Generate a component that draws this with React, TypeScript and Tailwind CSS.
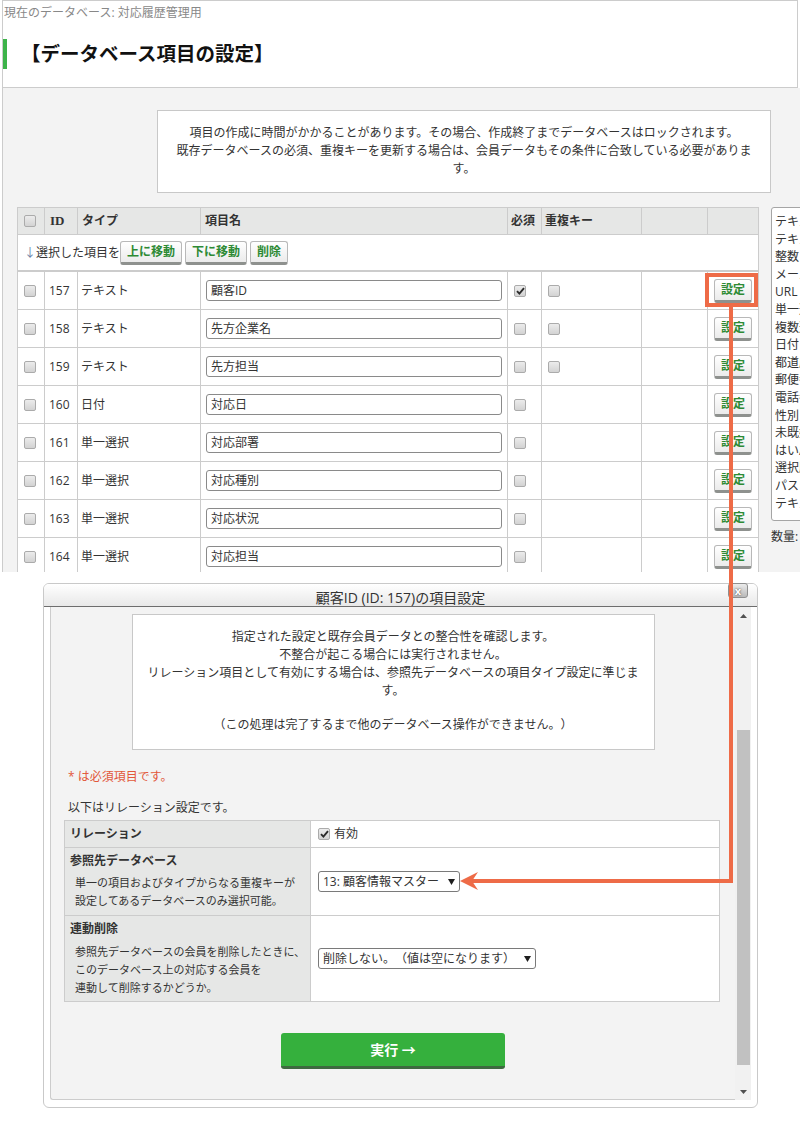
import type { ReactNode } from "react";

type FieldRow = {
  hasUniqueKey: boolean;
  id: number;
  name: string;
  required: boolean;
  type: string;
};

const fieldRows: FieldRow[] = [
  { id: 157, type: "テキスト", name: "顧客ID", required: true, hasUniqueKey: true },
  { id: 158, type: "テキスト", name: "先方企業名", required: false, hasUniqueKey: true },
  { id: 159, type: "テキスト", name: "先方担当", required: false, hasUniqueKey: true },
  { id: 160, type: "日付", name: "対応日", required: false, hasUniqueKey: false },
  { id: 161, type: "単一選択", name: "対応部署", required: false, hasUniqueKey: false },
  { id: 162, type: "単一選択", name: "対応種別", required: false, hasUniqueKey: false },
  { id: 163, type: "単一選択", name: "対応状況", required: false, hasUniqueKey: false },
  { id: 164, type: "単一選択", name: "対応担当", required: false, hasUniqueKey: false },
];

const typeOptions = [
  "テキスト",
  "テキストエリア",
  "整数",
  "メールアドレス",
  "URL",
  "単一選択",
  "複数選択",
  "日付",
  "都道府県",
  "郵便番号",
  "電話番号",
  "性別",
  "未既婚",
  "はい/いいえ",
  "選択肢",
  "パスワード",
  "テキスト（自動）",
];

function CheckBox({ checked = false }: { checked?: boolean }) {
  return (
    <span className="flex h-[12px] w-[12px] items-center justify-center rounded-[2px] border border-[#ababab] bg-[linear-gradient(#ececec,#d3d3d3)]">
      {checked ? (
        <svg width="9" height="8" viewBox="0 0 9 8">
          <path d="M1 4.2 3.4 6.6 8 1.2" fill="none" stroke="#2b2b2b" strokeWidth="1.9" />
        </svg>
      ) : null}
    </span>
  );
}

function GrayButton({ children }: { children: ReactNode }) {
  return (
    <button
      className="h-[24px] rounded-[3px] border border-[#b8b8b8] border-b-[3px] border-b-[#8e918e] bg-[linear-gradient(#ffffff,#ebebeb)] px-[6px] text-[12px] font-bold leading-[19px] text-[#2d8a34]"
      type="button"
    >
      {children}
    </button>
  );
}

function SelectBox({ label, width }: { label: string; width: "short" | "long" }) {
  return (
    <div
      className={
        width === "short"
          ? "flex h-[21px] w-[142px] items-center justify-between rounded-[3px] border border-[#7a7a7a] bg-white pl-[4px] pr-[4px] leading-[18px]"
          : "flex h-[21px] w-[218px] items-center justify-between rounded-[3px] border border-[#7a7a7a] bg-white pl-[4px] pr-[4px] leading-[18px]"
      }
    >
      <span className="whitespace-nowrap">{label}</span>
      <svg width="7" height="6" viewBox="0 0 7 6">
        <path d="M0 0h7L3.5 6z" fill="#1e1e1e" />
      </svg>
    </div>
  );
}

function FieldTable() {
  return (
    <div className="ml-[14px] w-[742px] border-l border-t border-[#ccc] bg-white">
      <div className="grid grid-cols-[27px_33px_123px_307px_34px_100px_66px_51px] bg-[#e6e7e6] font-bold">
        <div className="flex h-[27px] items-center border-b border-r border-[#ccc] pl-[6px]">
          <CheckBox />
        </div>
        <div className="flex h-[27px] items-center border-b border-r border-[#ccc] pl-[5px] font-[family-name:'Liberation_Serif',serif] text-[13px]">
          ID
        </div>
        <div className="flex h-[27px] items-center border-b border-r border-[#ccc] pl-[4px]">タイプ</div>
        <div className="flex h-[27px] items-center border-b border-r border-[#ccc] pl-[4px]">項目名</div>
        <div className="flex h-[27px] items-center border-b border-r border-[#ccc] pl-[3px]">必須</div>
        <div className="flex h-[27px] items-center border-b border-r border-[#ccc] pl-[3px]">重複キー</div>
        <div className="h-[27px] border-b border-r border-[#ccc]" />
        <div className="h-[27px] border-b border-r border-[#ccc]" />
      </div>

      <div className="flex h-[37px] items-center border-b-2 border-r border-[#ccc] pl-[6px]">
        <span className="whitespace-nowrap">
          <span className="text-[#6d82a8]">↓</span>選択した項目を
        </span>
        <div className="flex gap-[3px]">
          <GrayButton>上に移動</GrayButton>
          <GrayButton>下に移動</GrayButton>
          <GrayButton>削除</GrayButton>
        </div>
      </div>

      {fieldRows.map((row) => (
        <div className="grid grid-cols-[27px_33px_123px_307px_34px_100px_66px_51px]" key={row.id}>
          <div className="flex h-[38px] items-center border-b border-r border-[#ccc] pl-[6px]">
            <CheckBox />
          </div>
          <div className="flex h-[38px] items-center border-b border-r border-[#ccc] pl-[4px]">{row.id}</div>
          <div className="flex h-[38px] items-center border-b border-r border-[#ccc] pl-[3px]">{row.type}</div>
          <div className="flex h-[38px] items-center border-b border-r border-[#ccc] pl-[5px]">
            <div className="flex h-[21px] w-[296px] items-center rounded-[3px] border border-[#8a8a8a] bg-white pl-[4px] leading-[18px]">
              {row.name}
            </div>
          </div>
          <div className="flex h-[38px] items-center border-b border-r border-[#ccc] pl-[6px]">
            <CheckBox checked={row.required} />
          </div>
          <div className="flex h-[38px] items-center border-b border-r border-[#ccc] pl-[6px]">
            {row.hasUniqueKey ? <CheckBox /> : null}
          </div>
          <div className="h-[38px] border-b border-r border-[#ccc]" />
          <div className="flex h-[38px] items-center border-b border-r border-[#ccc] pl-[6px]">
            <GrayButton>設定</GrayButton>
          </div>
        </div>
      ))}
    </div>
  );
}

function SettingDialog() {
  return (
    <section className="ml-[43px] mt-[11px] w-[715px] rounded-[6px] border border-[#c9c9c9] bg-white">
      <div className="relative flex h-[23px] items-end justify-center rounded-t-[5px] border-b border-[#6d6d6d] bg-[linear-gradient(#ffffff,#e8e8e8)] text-[14px] leading-[17px]">
        顧客ID (ID: 157)の項目設定
        <span className="absolute right-[9px] top-[-1px] flex h-[15px] w-[20px] items-center justify-center rounded-[3px] border border-[#8f8f8f] bg-[linear-gradient(#ececec,#b9b9b9)] text-[11px] font-bold leading-[11px] text-white [text-shadow:0_0_2px_#333]">
          x
        </span>
      </div>

      <div className="flex px-[6px] pb-[7px]">
        <div className="flex-1 rounded-bl-[3px] border-b border-l border-[#ccc] bg-[#f3f3f3] pb-[30px]">
          <div className="mx-auto mt-[7px] w-[523px] border border-[#c8c8c8] bg-white px-[12px] pb-[15px] pt-[13px] text-center leading-[18px]">
            <p>
              指定された設定と既存会員データとの整合性を確認します。
              <br />
              不整合が起こる場合には実行されません。
              <br />
              リレーション項目として有効にする場合は、参照先データベースの項目タイプ設定に準じます。
            </p>
            <p className="mt-[16px]">（この処理は完了するまで他のデータベース操作ができません。）</p>
          </div>

          <p className="ml-[17px] mt-[18px] leading-[18px] text-[#e2583a]">* は必須項目です。</p>
          <p className="ml-[17px] mt-[13px] leading-[18px]">以下はリレーション設定です。</p>

          <div className="ml-[13px] mt-[3px] w-[656px] border-l border-t border-[#ccc]">
            <div className="grid grid-cols-[246px_409px]">
              <div className="flex h-[27px] items-center border-b border-r border-[#ccc] bg-[#e6e7e6] pl-[5px] font-bold">
                リレーション
              </div>
              <div className="flex h-[27px] items-center gap-[4px] border-b border-r border-[#ccc] bg-white pl-[7px]">
                <CheckBox checked />
                有効
              </div>

              <div className="h-[68px] border-b border-r border-[#ccc] bg-[#e6e7e6] pl-[5px] pt-[4px] leading-[18px]">
                <p className="font-bold">参照先データベース</p>
                <p className="mt-[4px] pl-[5px] text-[11px]">
                  単一の項目およびタイプからなる重複キーが
                  <br />
                  設定してあるデータベースのみ選択可能。
                </p>
              </div>
              <div className="flex h-[68px] items-center border-b border-r border-[#ccc] bg-white pl-[7px]">
                <SelectBox label="13: 顧客情報マスター" width="short" />
              </div>

              <div className="h-[86px] border-b border-r border-[#ccc] bg-[#e6e7e6] pl-[5px] pt-[4px] leading-[18px]">
                <p className="font-bold">連動削除</p>
                <p className="mt-[5px] pl-[5px] text-[11px]">
                  参照先データベースの会員を削除したときに、
                  <br />
                  このデータベース上の対応する会員を
                  <br />
                  連動して削除するかどうか。
                </p>
              </div>
              <div className="flex h-[86px] items-center border-b border-r border-[#ccc] bg-white pl-[7px]">
                <SelectBox label="削除しない。（値は空になります）" width="long" />
              </div>
            </div>
          </div>

          <button
            className="mx-auto mt-[31px] flex h-[36px] w-[224px] items-center justify-center rounded-[3px] border-b-[3px] border-[#3e6a40] bg-[#35b03d] text-[14px] font-bold text-white"
            type="button"
          >
            実行 →
          </button>
        </div>

        <div className="flex w-[16px] flex-col items-center bg-[#f1f1f1]">
          <div className="flex h-[17px] items-center justify-center">
            <svg width="7" height="4" viewBox="0 0 7 4">
              <path d="M0 4h7L3.5 0z" fill="#505050" />
            </svg>
          </div>
          <div className="h-[106px]" />
          <div className="h-[335px] w-[13px] bg-[#c1c1c1]" />
          <div className="flex-1" />
          <div className="flex h-[17px] items-center justify-center">
            <svg width="7" height="4" viewBox="0 0 7 4">
              <path d="M0 0h7L3.5 4z" fill="#505050" />
            </svg>
          </div>
        </div>
      </div>
    </section>
  );
}

export default function App() {
  return (
    <div className="relative h-[1142px] w-[800px] overflow-hidden bg-white font-[family-name:'Open_Sans','Noto_Sans_CJK_JP',sans-serif] text-[12px] text-[#333] [text-spacing-trim:space-all]">
      <div className="h-[572px] overflow-hidden pl-[2px]">
        <header className="h-[88px] w-[796px] border border-[#ccc] bg-white">
          <p className="pl-[1px] pt-[3px] leading-[18px] text-[#888]">現在のデータベース: 対応履歴管理用</p>
          <div className="mt-[17px] flex h-[30px] items-center">
            <span className="h-full w-[4px] bg-[#3db34a]" />
            <h1 className="ml-[14px] text-[19.5px] font-bold leading-[30px] text-[#111]">【データベース項目の設定】</h1>
          </div>
        </header>

        <main className="h-[484px] w-[900px] border-l border-[#ccc] bg-[#f3f3f3] pt-[22px]">
          <div className="ml-[154px] h-[83px] w-[614px] border border-[#c8c8c8] bg-white px-[16px] pt-[13px] text-center leading-[18px]">
            項目の作成に時間がかかることがあります。その場合、作成終了までデータベースはロックされます。
            <br />
            既存データベースの必須、重複キーを更新する場合は、会員データもその条件に合致している必要があります。
          </div>

          <div className="mt-[14px] flex items-start">
            <FieldTable />
            <div className="ml-[12px]">
              <div className="h-[314px] w-[120px] rounded-[3px] border border-[#a5a5a5] bg-white pl-[3px] pt-[5px] leading-[17.6px]">
                {typeOptions.map((option, index) => (
                  <p className="whitespace-nowrap" key={index}>
                    {option}
                  </p>
                ))}
              </div>
              <p className="mt-[7px] leading-[18px]">数量: 17</p>
            </div>
          </div>
        </main>
      </div>

      <SettingDialog />

      <svg className="pointer-events-none absolute left-0 top-0" width="800" height="1142" viewBox="0 0 800 1142">
        <rect x="707" y="275" width="49" height="30" fill="none" stroke="#ee6b47" strokeWidth="4" />
        <polyline points="731,305 731,881 472,881" fill="none" stroke="#ee6b47" strokeWidth="4" />
        <polygon points="460,881 478,872 472,881 478,890" fill="#ee6b47" />
      </svg>
    </div>
  );
}
